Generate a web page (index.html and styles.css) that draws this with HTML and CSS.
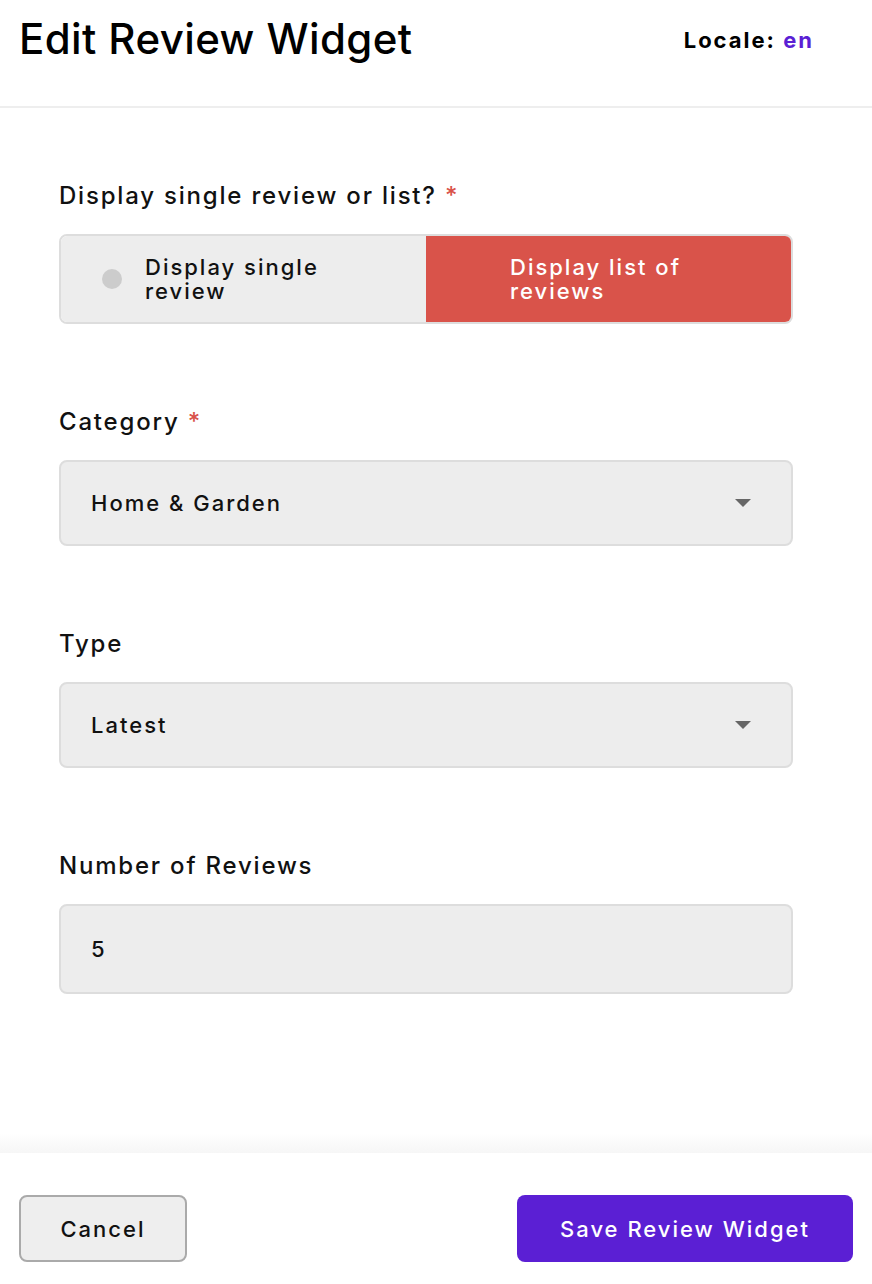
FILE: index.html
```html
<!DOCTYPE html>
<html lang="en">
<head>
<meta charset="utf-8">
<title>Edit Review Widget</title>
<link rel="stylesheet" href="styles.css">
</head>
<body>
<div class="page">
  <header class="header">
    <h1 class="title">Edit Review Widget</h1>
    <div class="locale">Locale: <span class="locale-value">en</span></div>
  </header>
  <main class="form">
    <div class="field">
      <div class="label">Display single review or list? <span class="req">*</span></div>
      <div class="toggle">
        <div class="option">
          <span class="dot"></span>
          <span class="option-text">Display single review</span>
        </div>
        <div class="option option-active">
          <span class="dot dot-hidden"></span>
          <span class="option-text">Display list of reviews</span>
        </div>
      </div>
    </div>
    <div class="field">
      <div class="label">Category <span class="req">*</span></div>
      <div class="select">
        <span class="select-value">Home &amp; Garden</span>
        <span class="caret"></span>
      </div>
    </div>
    <div class="field">
      <div class="label">Type</div>
      <div class="select">
        <span class="select-value">Latest</span>
        <span class="caret"></span>
      </div>
    </div>
    <div class="field">
      <div class="label">Number of Reviews</div>
      <div class="input">
        <span class="select-value">5</span>
      </div>
    </div>
  </main>
  <footer class="footer">
    <button class="btn btn-cancel">Cancel</button>
    <button class="btn btn-save">Save Review Widget</button>
  </footer>
</div>
</body>
</html>
```
FILE: styles.css
```css
* { box-sizing: border-box; }
html, body { margin: 0; padding: 0; background: #fff; }
body {
  font-family: Inter, "Noto Sans", sans-serif;
  color: #111;
}
.page {
  width: 872px;
  height: 1284px;
  display: flex;
  flex-direction: column;
}
.header {
  height: 108px;
  border-bottom: 2px solid #eeeeee;
  display: flex;
  align-items: flex-start;
  justify-content: space-between;
  padding: 0 58px 0 19px;
}
.title {
  margin: 13px 0 0 0;
  font-size: 42px;
  font-weight: 500;
  line-height: 52px;
  color: #000;
  letter-spacing: 0.4px;
}
.locale {
  margin-top: 26px;
  font-size: 22px;
  font-weight: 700;
  line-height: 28px;
  letter-spacing: 2px;
  color: #000;
}
.locale-value { color: #5b1fd4; }
.form {
  flex: 1;
  padding: 73px 79px 0 59px;
  display: flex;
  flex-direction: column;
  gap: 83px;
}
.field {
  display: flex;
  flex-direction: column;
  gap: 23px;
}
.label {
  font-size: 24px;
  font-weight: 500;
  line-height: 30px;
  letter-spacing: 1.8px;
  color: #111;
}
.req { color: #d9534a; }
.toggle {
  height: 90px;
  display: flex;
  border: 2px solid #dddddd;
  border-radius: 8px;
  overflow: hidden;
}
.option {
  flex: 1;
  display: flex;
  align-items: center;
  padding-left: 41px;
  background: #ededed;
}
.option-active { background: #d9534a; color: #fff; }
.dot {
  width: 20px;
  height: 20px;
  border-radius: 50%;
  background: #cccccc;
  flex: none;
}
.dot-hidden { visibility: hidden; }
.option-text {
  margin-left: 23px;
  max-width: 215px;
  font-size: 22px;
  font-weight: 500;
  line-height: 24px;
  letter-spacing: 2px;
}
.select, .input {
  height: 86px;
  background: #ededed;
  border: 2px solid #dddddd;
  border-radius: 8px;
  display: flex;
  align-items: center;
  justify-content: space-between;
  padding: 0 40px 0 30px;
}
.input { height: 90px; }
.select-value {
  font-size: 22px;
  font-weight: 500;
  letter-spacing: 2px;
  color: #111;
}
.caret {
  width: 0;
  height: 0;
  border-left: 8px solid transparent;
  border-right: 8px solid transparent;
  border-top: 8px solid #666;
}
.footer {
  height: 151px;
  padding: 62px 19px 0 19px;
  display: flex;
  align-items: flex-start;
  justify-content: space-between;
  background: linear-gradient(to bottom, #ffffff 0, #f6f6f6 20px, #ffffff 20px);
}
.btn {
  height: 67px;
  border-radius: 8px;
  font-family: Inter, "Noto Sans", sans-serif;
  font-size: 22px;
  font-weight: 500;
  letter-spacing: 2px;
  cursor: pointer;
}
.btn-cancel {
  width: 168px;
  background: #eeeeee;
  border: 2px solid #aaaaaa;
  color: #111;
}
.btn-save {
  width: 336px;
  background: #5b1fd4;
  border: none;
  color: #fff;
}
```
